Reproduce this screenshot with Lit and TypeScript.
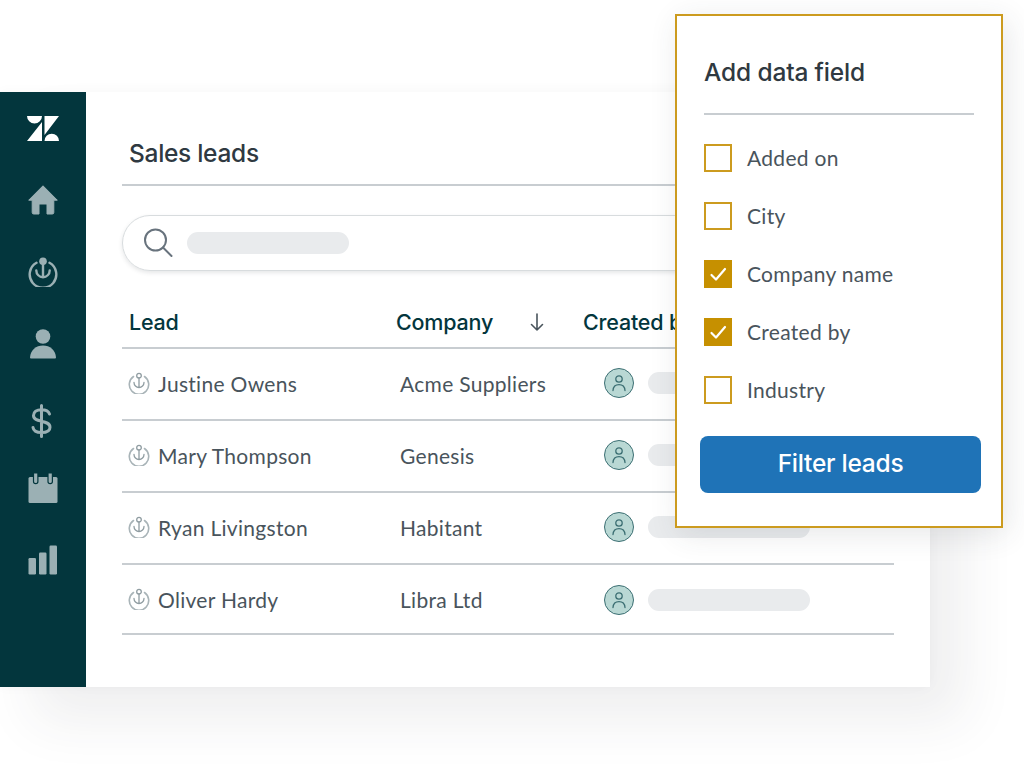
import { LitElement, html, css, svg } from "lit";
import { customElement } from "lit/decorators.js";

const sideIcons = [
  svg`<svg class="logo" viewBox="0 0 32 25" width="32" height="25"><path fill="#fff" d="M0 0H15A7.5 7.5 0 0 1 0 0ZM15 6V25H0ZM17.5 19V0H32ZM17.5 25A7.25 7.25 0 0 1 32 25Z"/></svg>`,
  svg`<svg viewBox="0 0 30 30" width="30" height="30"><path fill="#9bb0b4" stroke="#9bb0b4" stroke-linejoin="round" d="M15 .8 29.3 15.2H25.8V27.5a1.5 1.5 0 0 1-1.5 1.5H19V19H11V29H5.7a1.5 1.5 0 0 1-1.5-1.5V15.2H.7Z"/></svg>`,
  svg`<svg viewBox="0 0 30 30" width="30" height="30" fill="none" stroke="#9bb0b4" stroke-width="2.4" stroke-linecap="round"><circle cx="15" cy="4.300" r="3.800" fill="#9bb0b4" stroke="none"/><path d="M15 6V19.500M8.300 13.500A6.700 6.700 0 0 0 21.700 13.500M8.500 5.800A13.300 13.300 0 1 0 21.500 5.800"/></svg>`,
  svg`<svg viewBox="0 0 30 30" width="30" height="30"><circle cx="15" cy="7.5" r="7.3" fill="#9bb0b4"/><path fill="#9bb0b4" d="M2 28.5C2.5 21 8 16.500 15 16.500S27.500 21 28 28.500A1 1 0 0 1 27 29.500H3A1 1 0 0 1 2 28.500Z"/></svg>`,
  svg`<svg class="dollar" viewBox="0 0 24 34" width="24" height="34" fill="none" stroke="#9bb0b4" stroke-width="3" stroke-linecap="round"><path d="M11.500 1.500V32.500M19.500 10C18.500 7 15.500 5.700 11.500 5.700C6.500 5.700 3.500 8 3.500 11.500C3.500 15.500 7.500 16.300 11.500 17.200C16 18.200 20 19.300 20 23.200C20 26.800 16.500 28.500 11.500 28.500C7 28.500 3.500 26.800 3 23.500"/></svg>`,
  svg`<svg viewBox="0 0 30 30" width="30" height="30"><rect x="0.500" y="4" width="29" height="26" rx="1.500" fill="#9bb0b4"/><path fill="#9bb0b4" stroke="#03363d" stroke-width="1.200" d="M5.500 0V8.500a2.200 2.200 0 0 0 4.400 0V0ZM20 0V8.500a2.200 2.200 0 0 0 4.400 0V0Z"/></svg>`,
  svg`<svg viewBox="0 0 30 30" width="30" height="30" fill="#9bb0b4"><rect x="0.500" y="13" width="7.500" height="16.500" rx="1.200"/><rect x="11" y="7.500" width="7.500" height="22" rx="1.200"/><rect x="21.500" y="0.500" width="7.500" height="29" rx="1.200"/></svg>`,
];

const leadIcon = svg`<svg viewBox="0 0 22 22" width="22" height="22" fill="none" stroke="#8f9ca1" stroke-width="1.300" stroke-linecap="round"><circle cx="11" cy="3.700" r="2.300"/><path d="M11 6V14.500M6 10.500A5 5 0 0 0 16 10.500"/><path d="M5.500 4.500A9.700 9.700 0 1 0 16.500 4.500" stroke="#a9b4b8" stroke-width="1.600"/></svg>`;

const personIcon = svg`<svg viewBox="0 0 16 18" width="16" height="18" fill="none" stroke="#3c6f73" stroke-width="1.300" stroke-linecap="round"><circle cx="8" cy="5" r="3.200"/><path d="M2 16.500C2.300 12.500 4.700 10.700 8 10.700S13.700 12.500 14 16.500"/></svg>`;

const checkIcon = svg`<svg viewBox="0 0 28 28" width="28" height="28" fill="none" stroke="#fff" stroke-width="2.200" stroke-linecap="round" stroke-linejoin="round"><path d="M7.500 15 12 19.500 21 9"/></svg>`;

const rows = [
  ["Justine Owens", "Acme Suppliers"],
  ["Mary Thompson", "Genesis"],
  ["Ryan Livingston", "Habitant"],
  ["Oliver Hardy", "Libra Ltd"],
];

const fields: [string, boolean][] = [
  ["Added on", false],
  ["City", false],
  ["Company name", true],
  ["Created by", true],
  ["Industry", false],
];

@customElement("app-root")
export class AppRoot extends LitElement {
  static styles = css`
    :host {
      display: block;
      position: relative;
      width: 1024px;
      height: 767px;
      overflow: hidden;
      padding-top: 92px;
      box-sizing: border-box;
      background: #fff;
      font-family: "Lato", "Liberation Sans", sans-serif;
      color: #49545c;
    }
    .window {
      display: flex;
      width: 930px;
      background: #fff;
      box-shadow: 34px 34px 50px rgba(47, 57, 65, 0.08), 0 0 12px rgba(47, 57, 65, 0.03);
    }
    .sidebar {
      width: 86px;
      flex: none;
      background: #03363d;
      display: flex;
      flex-direction: column;
    }
    .cell {
      height: 72px;
      display: flex;
      align-items: center;
      justify-content: center;
    }
    .cell .dollar { margin: 10px 2px 0 0; }
    .main {
      flex: 1;
      padding: 0 36px 52px 36px;
      min-width: 0;
    }
    .title {
      height: 94px;
      box-sizing: border-box;
      padding: 44px 0 0 7px;
      border-bottom: 2px solid #c8cdd1;
      font-family: "Inter", sans-serif;
      font-weight: 500;
      font-size: 24.500px;
      letter-spacing: -0.3px;
      line-height: 35px;
      color: #2f3941;
    }
    .search {
      margin-top: 29px;
      height: 56px;
      box-sizing: border-box;
      border: 1.500px solid #d8dcde;
      border-radius: 28px;
      box-shadow: 0 2px 4px rgba(47, 57, 65, 0.12);
      display: flex;
      align-items: center;
      gap: 14px;
      padding-left: 20px;
    }
    .pill {
      height: 22px;
      width: 162px;
      border-radius: 11px;
      background: #e9ebed;
    }
    .thead {
      display: grid;
      grid-template-columns: 267px 187px 1fr;
      align-items: center;
      height: 78px;
      padding: 26px 0 0 7px;
      box-sizing: border-box;
      border-bottom: 2.500px solid #c8cdd1;
      font-family: "Inter", sans-serif;
      font-weight: 500;
      font-size: 21.500px;
      letter-spacing: -0.2px;
      color: #03363d;
      white-space: nowrap;
    }
    .sort {
      display: flex;
      align-items: center;
      justify-content: space-between;
      padding-right: 39px;
    }
    .row {
      display: grid;
      grid-template-columns: 278px 204px 1fr;
      align-items: center;
      height: 72px;
      padding-bottom: 2px;
      box-sizing: border-box;
      border-bottom: 2px solid #c8cdd1;
      font-size: 21px;
      letter-spacing: 0.3px;
    }
    .row:last-child { height: 70px; padding-bottom: 0; }
    .row:last-child .creator { margin-top: 2px; }
    .lead {
      display: flex;
      align-items: center;
      gap: 8px;
      padding-left: 6px;
    }
    .creator {
      display: flex;
      align-items: center;
      gap: 14px;
    }
    .avatar {
      width: 30px;
      height: 30px;
      box-sizing: border-box;
      border-radius: 50%;
      background: #b9d8d4;
      border: 1.500px solid #3c6f73;
      display: flex;
      align-items: center;
      justify-content: center;
    }
    .popup {
      position: absolute;
      left: 675px;
      top: 14px;
      width: 328px;
      height: 514px;
      box-sizing: border-box;
      background: #fff;
      border: 2px solid #cc9b1f;
      padding: 0 20px 0 23px;
      box-shadow: 4px 6px 28px rgba(47, 57, 65, 0.12);
    }
    .popup h2 {
      margin: 0 7px 0 4px;
      height: 99px;
      box-sizing: border-box;
      padding-top: 39px;
      border-bottom: 2px solid #c8cdd1;
      font-family: "Inter", sans-serif;
      font-weight: 500;
      font-size: 24.500px;
      letter-spacing: -0.15px;
      line-height: 35px;
      color: #2f3941;
    }
    .fields {
      display: flex;
      flex-direction: column;
      gap: 30px;
      margin: 29px 0 32px 4px;
    }
    .field {
      display: flex;
      align-items: center;
      gap: 15px;
      height: 28px;
      font-size: 21px;
      letter-spacing: 0.3px;
    }
    .field span { margin-bottom: 2px; }
    .box {
      width: 28px;
      height: 28px;
      box-sizing: border-box;
      border: 2px solid #cc9b1f;
      flex: none;
    }
    .box.on {
      border: none;
      background: #c69000;
    }
    .box svg { display: block; }
    .btn {
      height: 57px;
      box-sizing: border-box;
      padding-bottom: 3px;
      border-radius: 8px;
      background: #1f73b7;
      color: #fff;
      display: flex;
      align-items: center;
      justify-content: center;
      font-family: "Inter", sans-serif;
      font-weight: 500;
      font-size: 24.500px;
      letter-spacing: -0.25px;
    }
  `;

  render() {
    return html`
      <div class="window">
        <nav class="sidebar">
          ${sideIcons.map((i) => html`<div class="cell">${i}</div>`)}
        </nav>
        <div class="main">
          <div class="title">Sales leads</div>
          <div class="search">
            <svg viewBox="0 0 30 30" width="30" height="30" fill="none" stroke="#68737d" stroke-width="2" stroke-linecap="round">
              <circle cx="12.500" cy="12" r="10.500"></circle>
              <path d="M20 19.500 28.500 28"></path>
            </svg>
            <div class="pill"></div>
          </div>
          <div class="thead">
            <div>Lead</div>
            <div class="sort">
              <span>Company</span>
              <svg viewBox="0 0 14 20" width="14" height="20" fill="none" stroke="#49545c" stroke-width="1.600" stroke-linecap="round" stroke-linejoin="round">
                <path d="M7 2V18M1.500 12.500 7 18 12.500 12.500"></path>
              </svg>
            </div>
            <div>Created by</div>
          </div>
          ${rows.map(
            ([name, company]) => html`
              <div class="row">
                <div class="lead">${leadIcon}<span>${name}</span></div>
                <div>${company}</div>
                <div class="creator">
                  <div class="avatar">${personIcon}</div>
                  <div class="pill"></div>
                </div>
              </div>
            `
          )}
        </div>
      </div>
      <aside class="popup">
        <h2>Add data field</h2>
        <div class="fields">
          ${fields.map(
            ([label, on]) => html`
              <div class="field">
                <div class="box ${on ? "on" : ""}">${on ? checkIcon : ""}</div>
                <span>${label}</span>
              </div>
            `
          )}
        </div>
        <div class="btn">Filter leads</div>
      </aside>
    `;
  }
}
